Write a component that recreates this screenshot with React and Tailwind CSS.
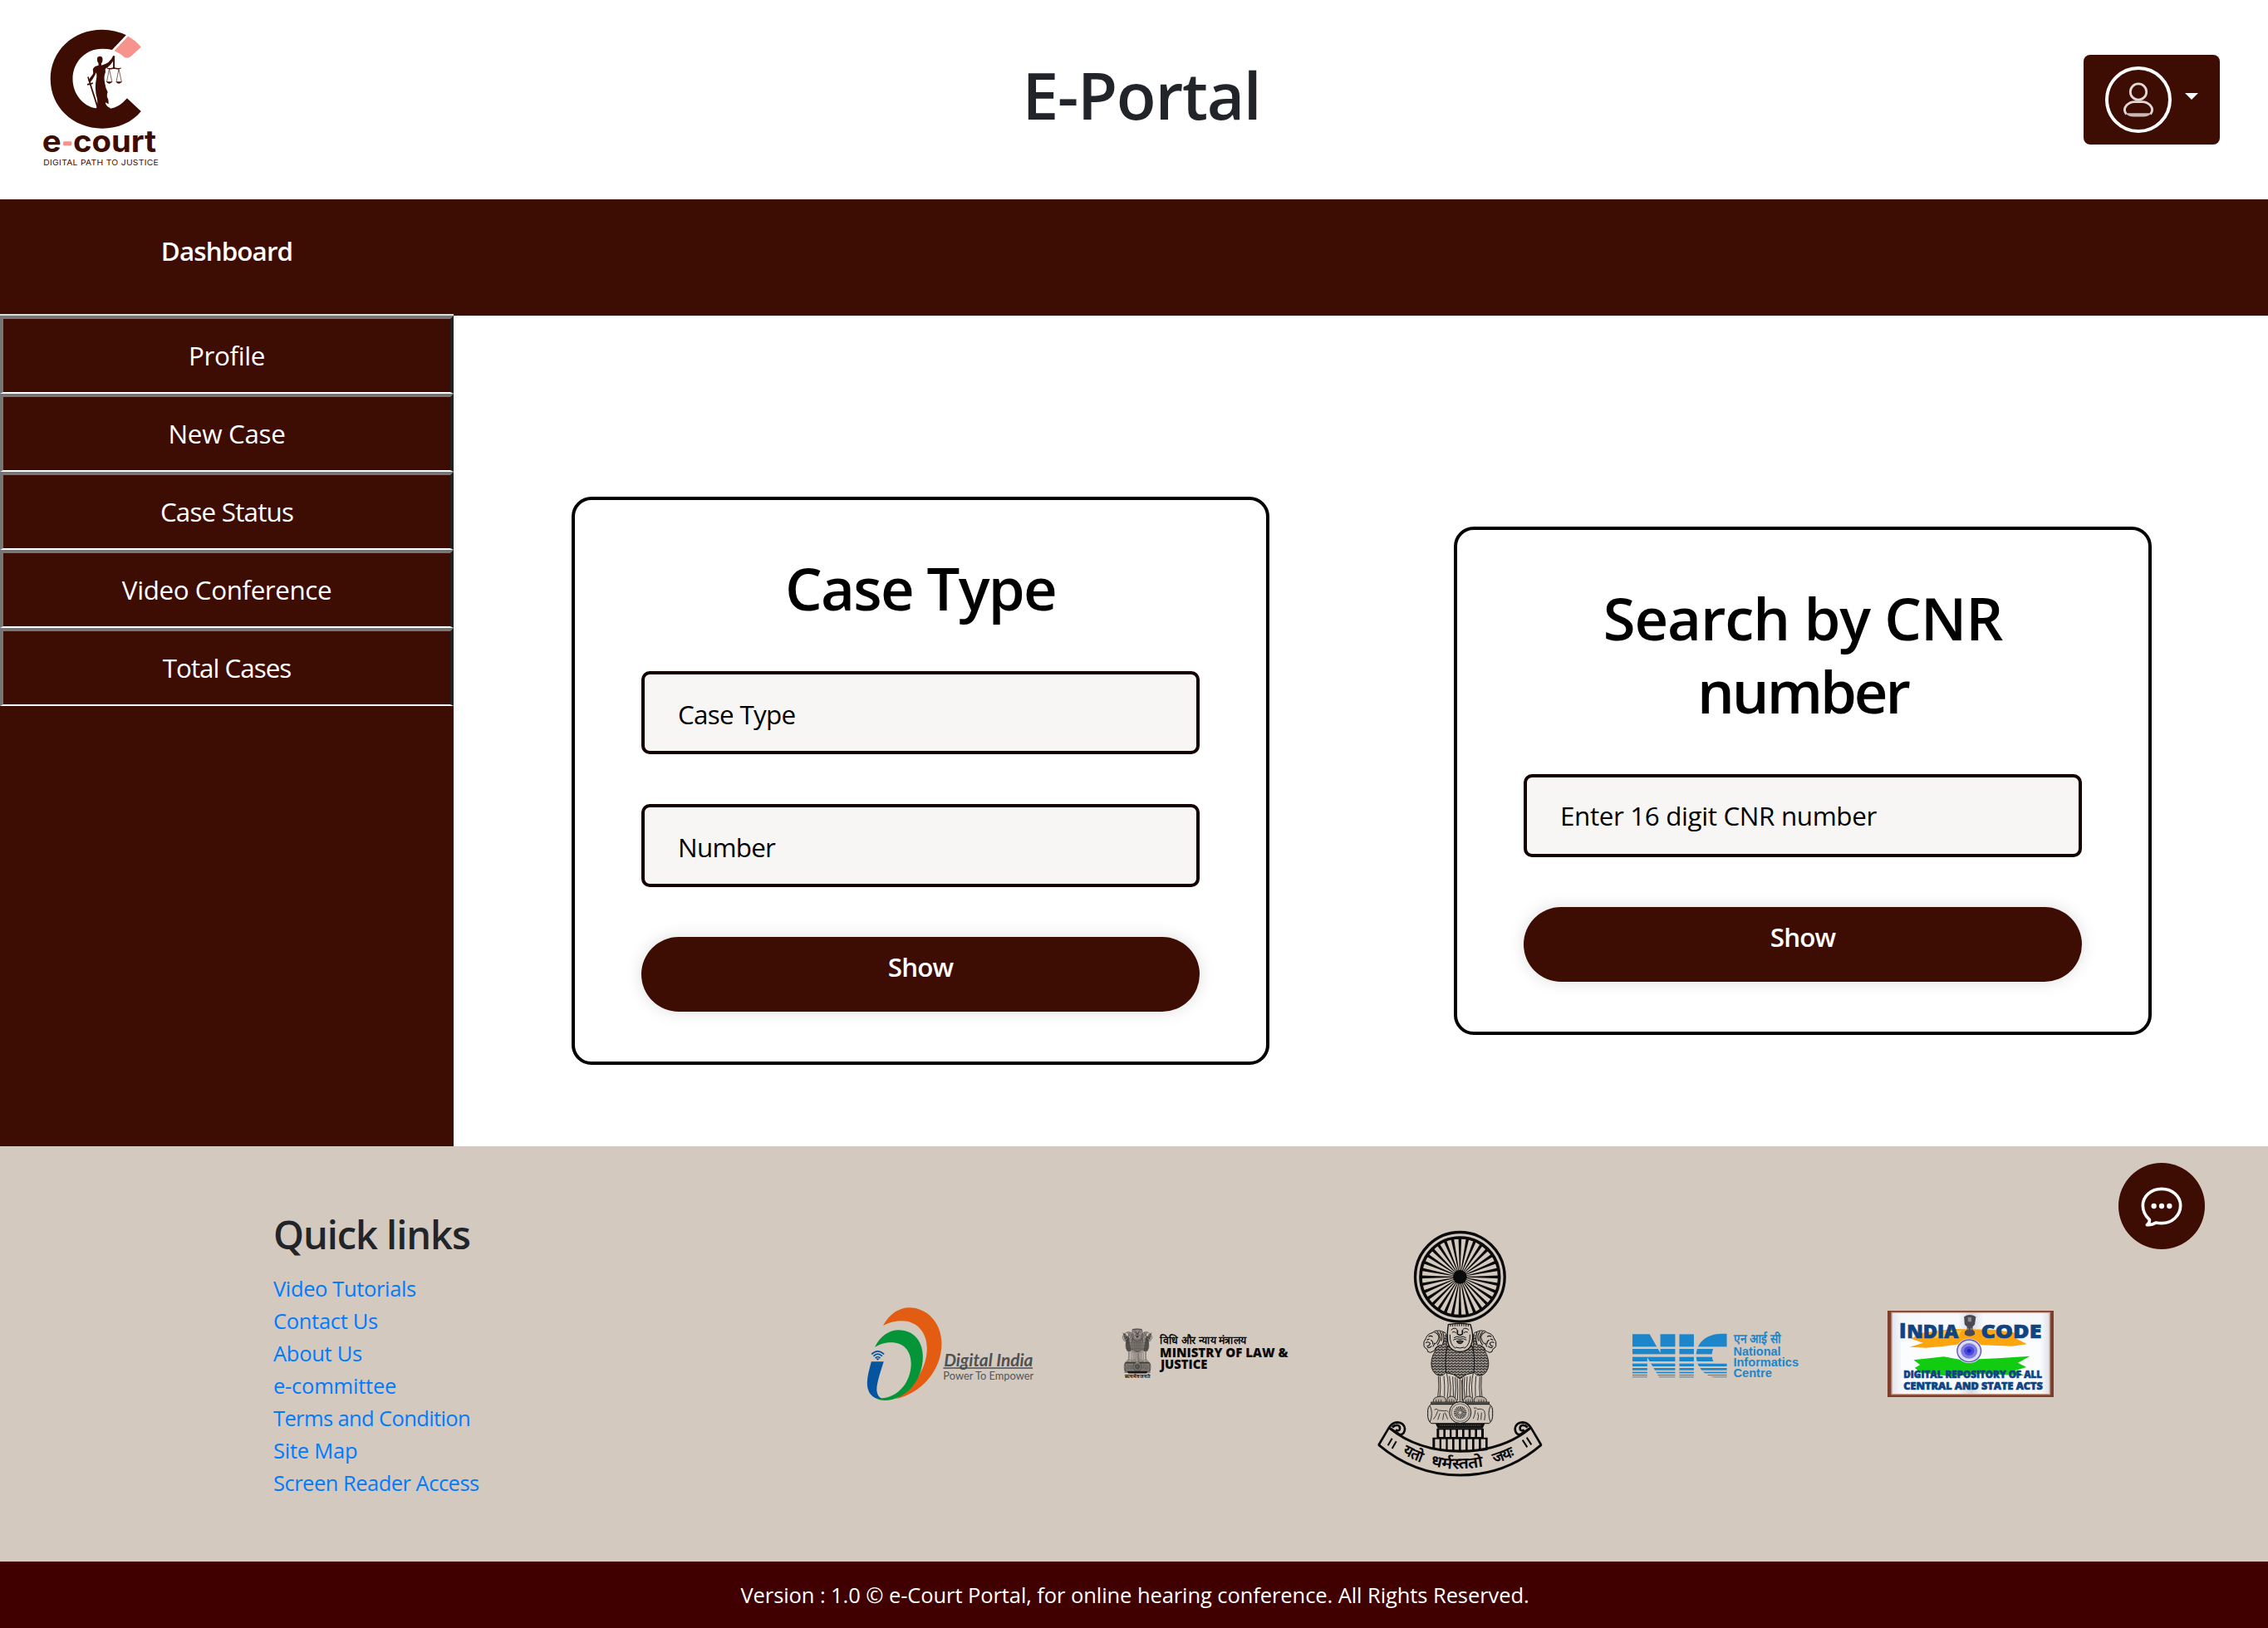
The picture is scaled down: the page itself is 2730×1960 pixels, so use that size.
import React from "react";

const menu = [
  { label: "Profile", tracking: "tracking-[-0.4px]" },
  { label: "New Case", tracking: "tracking-[-0.33px]" },
  { label: "Case Status", tracking: "tracking-[-0.82px]" },
  { label: "Video Conference", tracking: "tracking-[-0.42px]" },
  { label: "Total Cases", tracking: "tracking-[-1.02px]" },
];

const links = [
  { label: "Video Tutorials", tracking: "tracking-[-0.36px]" },
  { label: "Contact Us", tracking: "tracking-[-0.31px]" },
  { label: "About Us", tracking: "tracking-[-0.29px]" },
  { label: "e-committee", tracking: "tracking-[-0.22px]" },
  { label: "Terms and Condition", tracking: "tracking-[-0.62px]" },
  { label: "Site Map", tracking: "tracking-[-0.22px]" },
  { label: "Screen Reader Access", tracking: "tracking-[-0.51px]" },
];

function CourtLogo() {
  return (
    <svg className="h-[170px] w-[143.5px] overflow-visible" viewBox="130 100 375 510" preserveAspectRatio="none">
      <path
        fill="#3d0c02"
        d="M396 128 Q362 108 321 108 C228 108 158 186 158 286 C158 388 230 465 321 465 C370 465 415 443 443 403 L399 356 C382 378 365 391 345 393 L300 392 C262 385 228 342 228 286 C228 225 268 177 321 177 Q338 177 352 181 Z"
      />
      <path fill="#f6938d" d="M402 132 Q426 146 443 171 L410 206 Q401 213 391 208 Q378 194 359 184 Z" />
      <g fill="#3d0c02">
        <path d="M305 212 Q306 203 315 204 Q323 205 322 216 Q322 227 318 229 L318 240 L309 240 L309 229 Q304 224 305 212 Z" />
        <path d="M318 237 Q345 231 355 203 Q360 200 361 207 L359 212 Q350 238 329 251 Z" />
        <path d="M300 240 Q314 234 330 240 L331 262 Q325 278 329 300 Q331 318 338 333 Q333 348 340 360 L341 377 L331 371 Q331 384 346 391 L345 399 L300 399 Q308 380 305 358 Q295 320 303 282 Q305 266 299 258 Z" />
        <path d="M300 240 Q289 248 292 257 Q294 266 290 272 Q283 280 277 293 L283 299 Q292 286 299 270 L306 252 Z" />
        <path d="M274 279 L278 278 L309 388 L304 389 Z" />
        <path d="M273 304 L291 299 L292 304 L275 309 Z" />
        <path d="M355 210 H360 V250 H355 Z" />
        <path d="M334 296 H353 Q349 303 343 303 Q337 303 334 296 Z M364 296 H383 Q379 303 373 303 Q367 303 364 296 Z" />
      </g>
      <g fill="none" stroke="#3d0c02" strokeWidth="1.8">
        <path strokeWidth="4" d="M336 247 Q347 252 358 246 Q369 252 380 247" />
        <path d="M343 250 L335 298 M343 250 L352 298 M373 250 L365 298 M373 250 L382 298" />
      </g>
      <g fill="#3d0c02" fontFamily="Inter, sans-serif" fontWeight="750">
        <text x="132" y="551" fontSize="108" textLength="60" lengthAdjust="spacingAndGlyphs">e</text>
        <text x="229" y="551" fontSize="108" textLength="262" lengthAdjust="spacingAndGlyphs">court</text>
      </g>
      <rect x="198" y="512" width="27" height="15" rx="3" fill="#f6938d" />
      <text x="136" y="599" fontSize="27" textLength="362" fill="#3d0c02" fontFamily="Inter, sans-serif">
        DIGITAL PATH TO JUSTICE
      </text>
    </svg>
  );
}

function Header() {
  return (
    <header className="flex h-[240px] bg-white">
      <div className="w-[240px] pt-[33px] pl-[50px]">
        <CourtLogo />
      </div>
      <h1 className="flex-1 pt-[66px] text-center text-[78.4px] leading-[96px] font-semibold tracking-[-1.3px] text-[#212529]">
        E-Portal
      </h1>
      <div className="w-[222px] pt-[66px]">
        <button className="flex h-[108px] w-[164px] items-start rounded-lg bg-[#3d0c02] pt-[14px] pl-[26px]">
          <svg className="h-20 w-20" viewBox="0 0 80 80" fill="none">
            <circle cx="40" cy="40" r="38" stroke="#fff" strokeWidth="4" />
            <circle cx="40" cy="30.5" r="9.7" stroke="#e2d9d7" strokeWidth="2.8" />
            <path stroke="#e2d9d7" strokeWidth="2.8" d="M25.5 57.500 Q21 52 26 46.5 Q30 42.600 35 42.600 H45 Q50 42.600 54 46.5 Q59 52 54.500 57.500" />
            <path fill="#c9bab7" d="M24.500 56.200 H55.500 Q52 60.500 46 60.500 H34 Q28 60.500 24.500 56.200 Z" />
          </svg>
          <svg className="mt-8 ml-4 h-2 w-4" viewBox="0 0 16 8">
            <path d="M0 0 H16 L8 8 Z" fill="#fff" />
          </svg>
        </button>
      </div>
    </header>
  );
}

function Sidebar() {
  return (
    <aside className="-mt-0.5 w-[546px] border-t-2 border-[#dcdcdc] bg-[#3d0c02]">
      {menu.map((m) => (
        <div
          key={m.label}
          className="h-[94px] border-t-4 border-r-4 border-b-2 border-l-4 border-t-[#767676] border-r-[#212121] border-b-white border-l-[#767676]"
        >
          <div className={"text-center text-[31.4px] leading-[88px] text-white " + m.tracking}>{m.label}</div>
        </div>
      ))}
    </aside>
  );
}

function Field({ text, className }) {
  return (
    <div
      className={
        "h-[100px] rounded-[10px] border-4 border-[#120200] bg-[#f8f6f5] pl-10 text-[31.4px] text-black " + className
      }
    >
      {text}
    </div>
  );
}

function ShowButton() {
  return (
    <button className="mt-[60px] block h-[90px] w-full rounded-full bg-[#3d0c02] pb-[18px] text-[31.4px] leading-[72px] font-semibold tracking-[-0.92px] text-white shadow-[0_0_20px_rgba(0,0,0,0.13)]">
      Show
    </button>
  );
}

function Card({ children }) {
  return <div className="w-[840px] rounded-3xl border-4 border-black px-20 pt-[62px] pb-[60px]">{children}</div>;
}

function Main() {
  return (
    <div className="flex h-[1000px]">
      <Sidebar />
      <main className="flex flex-1 items-center gap-[222px] bg-white pt-[120px] pl-[142px]">
        <Card>
          <h2 className="mb-14 text-center text-[70.6px] leading-[88px] font-semibold tracking-[-1.7px] text-black">
            Case Type
          </h2>
          <Field text="Case Type" className="pt-1 leading-[88px] tracking-[-0.7px]" />
          <Field text="Number" className="mt-[60px] pt-1 leading-[88px] tracking-[-0.75px]" />
          <ShowButton />
        </Card>
        <Card>
          <h2 className="mb-14 text-center text-[70.6px] leading-[88px] font-semibold text-black">
            <span className="block tracking-[-1.05px]">Search by CNR</span>
            <span className="block tracking-[-3.05px]">number</span>
          </h2>
          <Field text="Enter 16 digit CNR number" className="leading-[92px] tracking-[-0.37px]" />
          <ShowButton />
        </Card>
      </main>
    </div>
  );
}

function DigitalIndia() {
  return (
    <svg className="h-[112px] w-[200px] overflow-visible" viewBox="115.500 101 522 337" preserveAspectRatio="none">
      <path fill="#e25c12" d="M165 167 C185 125 215 102 247 102 C305 102 349 160 349 232 C349 330 285 412 205 433 C245 405 303 335 303 250 C303 190 270 150 225 150 C205 150 185 155 165 167 Z" />
      <path fill="#069438" d="M139 245 C155 205 185 183 214 183 C262 183 290 225 290 280 C290 370 232 438 170 438 Q155 438 143 431 L160 430 C213 428 253 370 253 305 C253 258 230 228 190 228 C172 228 158 232 139 245 Z" />
      <path fill="#0554a0" d="M128 297 H167 C158 330 145 372 145 400 Q146 424 160 431 Q140 437 125 415 Q115 400 115 375 C115 350 122 325 128 297 Z" />
      <g fill="none" stroke="#0554a0" strokeWidth="5">
        <path d="M129 271 Q148 249 168 271" />
        <path d="M135 278 Q148 262 162 278" />
        <path d="M141 285 Q148 275 156 285" />
      </g>
      <path fill="#0554a0" d="M143 287 Q148 283 154 287 L148 293 Z" />
      <text x="356" y="315" fontSize="62" textLength="280" lengthAdjust="spacingAndGlyphs" fill="#4f5052" fontFamily="Lato, sans-serif" fontWeight="700" fontStyle="italic">
        Digital India
      </text>
      <rect x="354" y="318.5" width="281" height="4.5" fill="#4f5052" />
      <text x="354" y="362" fontSize="38" textLength="284" lengthAdjust="spacingAndGlyphs" fill="#555557" fontFamily="Lato, sans-serif">
        Power To Empower
      </text>
    </svg>
  );
}

function SideLion() {
  return (
    <g>
      <path fill="url(#mane)" stroke="#111" strokeWidth="2.5" d="M264 500 Q246 530 252 560 Q262 592 290 588 L306 576 V440 L292 430 Q276 470 264 500 Z" />
      <path fill="#cfc4ba" stroke="#111" strokeWidth="3" d="M302 434 Q288 428 280 426 Q262 424 254 434 Q236 438 232 452 Q220 466 224 482 Q228 490 236 494 L238 502 Q248 508 254 502 Q264 500 266 488 Q280 476 290 478" />
      <path fill="none" stroke="#111" strokeWidth="3.2" d="M240 448 q8 -6 16 0 M230 470 q10 -6 16 2 q-2 10 -12 10 M262 432 q14 4 16 18 q-4 18 -14 24 M248 460 q10 4 8 16 M282 430 q12 14 4 34 M236 486 q8 4 16 -4 M272 430 q12 10 10 28 q-4 14 -10 20 M292 432 q8 18 0 44 M234 460 l10 -4 M256 484 q6 -6 6 -14" />
      <path fill="none" stroke="#111" strokeWidth="2.5" d="M276 590 Q280 630 274 668 M282 592 Q286 630 281 668 M296 590 Q300 625 298 664 M306 580 Q316 620 308 670 M316 590 Q324 630 318 672 M328 592 Q330 630 331 676 M337 594 Q342 630 336 676 M344 598 Q348 640 345 678" />
      <path fill="#b8ada3" stroke="#111" strokeWidth="2.5" d="M258 686 Q256 670 270 666 Q290 660 300 668 Q306 676 302 686 Z M308 686 Q304 672 316 664 Q332 660 340 674 Q344 680 342 686 Z" />
      <path fill="none" stroke="#111" strokeWidth="2" d="M268 684 v-9 M277 684 v-10 M286 684 v-9 M316 684 v-10 M324 684 v-11 M332 684 v-9" />
    </g>
  );
}

/* Lion capital: three lions standing on the abacus */
function LionCapital() {
  return (
    <g>
      <defs>
        <pattern id="mane" width="12" height="10" patternUnits="userSpaceOnUse">
          <rect width="12" height="10" fill="#cfc4ba" />
          <path d="M0 2 L6 8 L12 2 M0 -8 L6 -2 L12 -8" fill="none" stroke="#111" strokeWidth="3.5" />
          <path d="M0 0 V10" stroke="#111" strokeWidth="1.5" />
        </pattern>
      </defs>
      <SideLion />
      <g transform="translate(708 0) scale(-1 1)">
        <SideLion />
      </g>
      <path fill="url(#mane)" stroke="#111" strokeWidth="3" d="M310 480 Q298 520 304 578 L330 584 L354 600 L378 584 L404 578 Q410 520 398 480 Z" />
      <path fill="#cfc4ba" stroke="#111" strokeWidth="4" d="M312 404 Q354 396 392 404 Q404 440 398 466 Q392 492 374 498 Q354 506 334 498 Q314 490 310 466 Q306 436 312 404 Z" />
      <path stroke="#111" strokeWidth="3" d="M320 402 v9 M328 401 v10 M336 400 v10 M344 400 v10 M352 400 v10 M360 400 v10 M368 400 v10 M376 401 v10 M384 402 v9" />
      <path fill="none" stroke="#111" strokeWidth="3" d="M322 424 Q334 412 344 422 M386 424 Q374 412 364 422 M326 432 q8 -5 14 2 M382 432 q-8 -5 -14 2 M318 440 Q316 476 338 490 M390 440 Q392 476 370 490 M332 452 Q342 444 354 450 Q366 444 376 452 M330 460 Q342 452 354 457 Q366 452 378 460 M338 486 Q354 492 370 486" />
      <path fill="none" stroke="#111" strokeWidth="5" d="M345 424 V438 Q354 446 363 438 V424" />
      <path fill="#444" stroke="#111" strokeWidth="3" d="M342 464 Q354 460 366 464 Q364 472 354 473 Q344 472 342 464 Z" />
      <path fill="none" stroke="#111" strokeWidth="2.5" d="M354 602 V682 M360 604 Q364 640 362 680" />
      <rect x="250" y="684" width="210" height="8" fill="#5d5751" stroke="#111" strokeWidth="2" />
      <path fill="#cfc4ba" stroke="#111" strokeWidth="3" d="M250 692 H460 Q474 700 472 724 Q474 750 460 761 H250 Q236 750 238 724 Q236 700 250 692 Z" />
      <path fill="none" stroke="#111" strokeWidth="2.5" d="M246 698 Q258 724 246 756 M464 698 Q452 724 464 756" />
      <circle cx="355" cy="722" r="39" fill="#cfc4ba" stroke="#111" strokeWidth="3" />
      <circle cx="355" cy="722" r="32" fill="none" stroke="#333" strokeWidth="2" />
      <circle cx="355" cy="722" r="14" fill="none" stroke="#222" strokeWidth="18" strokeDasharray="1.8 1.87" />
      <path fill="none" stroke="#222" strokeWidth="2.5" d="M262 712 Q270 704 276 714 L298 716 Q308 712 312 720 M274 716 Q268 736 258 746 M282 724 L274 748 M300 722 L310 746 M296 724 L292 748 M404 706 Q412 702 418 710 Q434 706 442 716 Q448 730 442 750 M410 712 Q408 732 402 744 M418 722 Q424 736 418 750 M432 722 L430 748" />
      <path fill="#111" d="M266 762 H444 L436 779 H274 Z" />
      <path stroke="#cfc4ba" strokeWidth="1.5" d="M280 768 H430" strokeDasharray="5 3" />
    </g>
  );
}

function Ministry() {
  return (
    <svg className="h-[62px] w-[200px] overflow-visible" viewBox="920 178 523 186" preserveAspectRatio="none">
      <g transform="translate(841 11) scale(0.356 0.424)">
        <LionCapital />
        <path d="M224 430 L250 505 L262 590 L300 590 L280 470 Z M484 430 L458 505 L446 590 L408 590 L428 470 Z" fill="#111" opacity="0.5" />
        <path d="M312 404 H396 V600 H312 Z" fill="#111" opacity="0.25" />
        <path d="M240 690 H470 V776 H240 Z" fill="#111" opacity="0.4" />
      </g>
      <g fill="#0a0a0a" fontFamily="'Open Sans', sans-serif">
        <text x="927" y="358" fontSize="17" fontWeight="700" textLength="80" lengthAdjust="spacingAndGlyphs">सत्यमेव जयते</text>
        <text x="1038" y="236" fontSize="39" fontWeight="600" textLength="272" lengthAdjust="spacingAndGlyphs">विधि और न्याय मंत्रालय</text>
        <text x="1038" y="282" fontSize="46" fontWeight="800" textLength="404" lengthAdjust="spacingAndGlyphs">MINISTRY OF LAW &amp;</text>
        <text x="1040" y="325" fontSize="46" fontWeight="800" textLength="148" lengthAdjust="spacingAndGlyphs">JUSTICE</text>
      </g>
    </svg>
  );
}

const spokes = Array.from({ length: 32 }, (_, i) => i * 11.25);
const upperBricks = [279, 302, 324, 347, 370, 393, 416];
const lowerBricks = [264, 287, 310, 334, 358, 382, 406, 430];

function Scroll() {
  return (
    <g fill="none" stroke="#0a0a0a" strokeWidth="8">
      <path d="M60 840 L98 776 Q110 757 128 757 Q152 758 155 780 Q155 800 138 802 L104 780" />
      <path d="M110 776 Q118 766 130 768 Q140 772 136 784 Q130 790 122 784" />
    </g>
  );
}

function SupremeCourtEmblem() {
  return (
    <svg className="h-[298px] w-[200px] overflow-visible" viewBox="56 63 600 894" preserveAspectRatio="none">
      <circle cx="354" cy="232" r="161.5" fill="none" stroke="#0a0a0a" strokeWidth="10" />
      <circle cx="354" cy="232" r="142" fill="none" stroke="#0a0a0a" strokeWidth="11" />
      {spokes.map((a) => (
        <path key={a} d="M353 215 H355 L359.5 90 H348.5 Z" fill="#0a0a0a" transform={`rotate(${a} 354 232)`} />
      ))}
      <circle cx="354" cy="232" r="25" fill="#0a0a0a" />
      <LionCapital />
      <path fill="#0a0a0a" d="M270 779 H440 V812 H454 V858 Q354 870 255 854 V812 H270 Z" />
      {upperBricks.map((x) => (
        <rect key={x} x={x} y="784" width="15" height="26" fill="#d4c9bf" />
      ))}
      {lowerBricks.map((x) => (
        <rect key={x} x={x} y="818" width="16" height={x < 270 || x > 425 ? 35 : 39} fill="#d4c9bf" />
      ))}
      <path fill="none" stroke="#0a0a0a" strokeWidth="9" d="M100 778 Q200 860 354 862 Q510 860 608 778" />
      <path fill="none" stroke="#0a0a0a" strokeWidth="9" d="M60 838 Q190 948 354 948 Q520 948 648 838" />
      <Scroll />
      <g transform="translate(708 0) scale(-1 1)">
        <Scroll />
      </g>
      <path stroke="#0a0a0a" strokeWidth="6" d="M109 815 L94 841 M124 826 L109 852 M580 821 L597 847 M595 812 L612 838" />
      <path id="motto" fill="none" d="M92 840 Q350 1010 622 838" />
      <g fill="#0a0a0a" fontFamily="'Open Sans', sans-serif" fontWeight="600" fontSize="54" textAnchor="middle">
        <text>
          <textPath href="#motto" startOffset="17.5%">यतो</textPath>
        </text>
        <text letterSpacing="1">
          <textPath href="#motto" startOffset="47.5%" textLength="194" lengthAdjust="spacingAndGlyphs">धर्मस्ततो</textPath>
        </text>
        <text>
          <textPath href="#motto" startOffset="79%">जयः</textPath>
        </text>
      </g>
    </svg>
  );
}

const nicGaps = [
  [213, 8],
  [240, 10],
  [266, 8],
  [284, 6],
  [298, 6],
  [309, 5],
  [317, 4],
];

function Nic() {
  return (
    <svg className="h-[57px] w-[200px] overflow-visible" viewBox="73 155 560 171" preserveAspectRatio="none">
      <g fill="#1d86ca">
        <path d="M73 168 H131 L167 236 V168 H217 V324 H163 L123 252 V324 H73 Z" />
        <rect x="231" y="168" width="49" height="156" />
        <path d="M391 166 V216 H347 Q334 244 348 273 H391 V324 H350 C315 318 288 285 288 245 C288 200 320 167 372 166 Z" />
      </g>
      {nicGaps.map(([y, h]) => (
        <rect key={y} x="72" y={y} width="321" height={h} fill="#d4c9bf" />
      ))}
      <g fill="#1d86ca" fontFamily="'Liberation Sans', sans-serif" fontWeight="700" fontSize="43">
        <text x="415" y="200" fontSize="46" fontWeight="600" textLength="158" lengthAdjust="spacingAndGlyphs" fontFamily="'Open Sans', sans-serif">एन आई सी</text>
        <text x="413" y="245" textLength="160" lengthAdjust="spacingAndGlyphs">National</text>
        <text x="413" y="285" textLength="220" lengthAdjust="spacingAndGlyphs">Informatics</text>
        <text x="413" y="324" textLength="130" lengthAdjust="spacingAndGlyphs">Centre</text>
      </g>
    </svg>
  );
}

function IndiaCode() {
  return (
    <svg className="h-[104px] w-[200px] overflow-visible" viewBox="930 84 560 312" preserveAspectRatio="none">
      <defs>
        <linearGradient id="pages" x1="0" x2="1" y1="0" y2="0">
          <stop offset="0" stopColor="#e3e6ee" />
          <stop offset="0.06" stopColor="#f7f8fb" />
          <stop offset="0.42" stopColor="#f8f9fb" />
          <stop offset="0.5" stopColor="#d5d9e2" />
          <stop offset="0.58" stopColor="#f8f9fb" />
          <stop offset="0.95" stopColor="#f7f8fb" />
          <stop offset="1" stopColor="#dfe2ea" />
        </linearGradient>
      </defs>
      <rect x="930" y="84" width="560" height="312" fill="#7d3f2d" />
      <rect x="942" y="89" width="537" height="299" fill="#c99a86" />
      <rect x="946" y="92" width="529" height="292" fill="url(#pages)" />
      <rect x="975" y="195" width="470" height="150" fill="#fbfcfd" />
      <path fill="#fda50f" d="M1040 165 L1150 150 L1290 152 L1370 165 L1365 185 L1400 205 L1350 212 L1250 208 L1210 200 L1120 212 L1060 218 L1005 215 L1050 200 L1010 185 Z" />
      <path fill="#ffc23c" d="M1080 160 L1180 155 L1170 175 L1090 182 Z" />
      <path fill="#12cc12" d="M1018 262 L1120 250 L1180 262 L1300 256 L1410 248 L1370 272 L1398 288 L1360 300 L1390 318 L1240 312 L1150 322 L1040 308 L1022 290 L1040 280 Z" />
      <circle cx="1205" cy="229" r="44" fill="#f4f4fb" />
      <circle cx="1205" cy="229" r="40" fill="#dcdcf6" stroke="#5c58bd" strokeWidth="4" />
      <circle cx="1205" cy="229" r="28" fill="#7d7be0" />
      <circle cx="1205" cy="229" r="17" fill="#4a48dc" />
      <circle cx="1205" cy="229" r="7" fill="#2222c8" />
      <path fill="#4a4a50" d="M1188 106 Q1207 92 1228 106 L1224 134 L1217 142 V152 L1224 160 V170 Q1207 182 1190 170 V160 L1198 152 V142 L1190 134 Z" />
      <path fill="#8a8a90" d="M1201 108 h12 v16 h-12 Z M1200 146 h4 v8 h-4 Z M1210 146 h4 v8 h-4 Z" />
      <g fill="#0f4382" stroke="#0f4382" strokeWidth="2" fontFamily="'Open Sans', sans-serif" fontWeight="800">
        <text x="969" y="182" fontSize="75" textLength="24" lengthAdjust="spacingAndGlyphs">I</text>
        <text x="995" y="182" fontSize="67" textLength="174" lengthAdjust="spacingAndGlyphs">NDIA</text>
        <text x="1245" y="184" fontSize="70" textLength="204" lengthAdjust="spacingAndGlyphs">CODE</text>
        <text x="984" y="328" fontSize="38" textLength="467" lengthAdjust="spacingAndGlyphs">DIGITAL REPOSITORY OF ALL</text>
        <text x="984" y="369" fontSize="38" textLength="469" lengthAdjust="spacingAndGlyphs">CENTRAL AND STATE ACTS</text>
      </g>
    </svg>
  );
}

function ChatButton() {
  return (
    <button className="absolute top-5 right-[76px] size-[104px] rounded-full bg-[#3d0c02]">
      <svg className="size-[104px]" viewBox="150 120 312 312" fill="none" stroke="#fff">
        <path
          strokeWidth="11"
          strokeLinejoin="round"
          d="M262 325 C247 312 238 295 238 274 C238 240 268 214 306 214 C344 214 374 240 374 274 C374 310 344 338 306 338 Q295 338 285 336 Q272 345 253 344 Q264 336 262 325 Z"
        />
        <g fill="#fff" stroke="none">
          <circle cx="278" cy="276" r="9.500" />
          <circle cx="306" cy="276" r="9.500" />
          <circle cx="334" cy="276" r="9.500" />
        </g>
      </svg>
    </button>
  );
}

function Footer() {
  return (
    <footer>
      <div className="relative flex h-[500px] bg-[#d4c9bf]">
        <div className="w-[1044px] pt-[77px] pl-[329px]">
          <h3 className="mb-[17px] text-[47px] leading-[58px] font-semibold tracking-[-1.05px] text-[#212529]">Quick links</h3>
          <ul className="text-[25.5px] leading-[39px] text-[#007bff]">
            {links.map((l) => (
              <li key={l.label} className={l.tracking}>
                {l.label}
              </li>
            ))}
          </ul>
        </div>
        <div className="flex items-center gap-[107px]">
          <DigitalIndia />
          <Ministry />
          <SupremeCourtEmblem />
          <Nic />
          <IndiaCode />
        </div>
        <ChatButton />
      </div>
      <p className="h-20 bg-[#400000] pl-[2px] text-center text-[25.5px] leading-[80px] tracking-[-0.08px] text-white">
        Version : 1.0 © e-Court Portal, for online hearing conference. All Rights Reserved.
      </p>
    </footer>
  );
}

export default function App() {
  return (
    <div className="w-[2730px] overflow-hidden bg-white font-['Open_Sans',sans-serif]">
      <Header />
      <nav className="h-[140px] bg-[#3d0c02]">
        <div className="w-[546px] pt-[38px] text-center text-[31.4px] leading-[48px] font-semibold tracking-[-0.9px] text-white">
          Dashboard
        </div>
      </nav>
      <Main />
      <Footer />
    </div>
  );
}
